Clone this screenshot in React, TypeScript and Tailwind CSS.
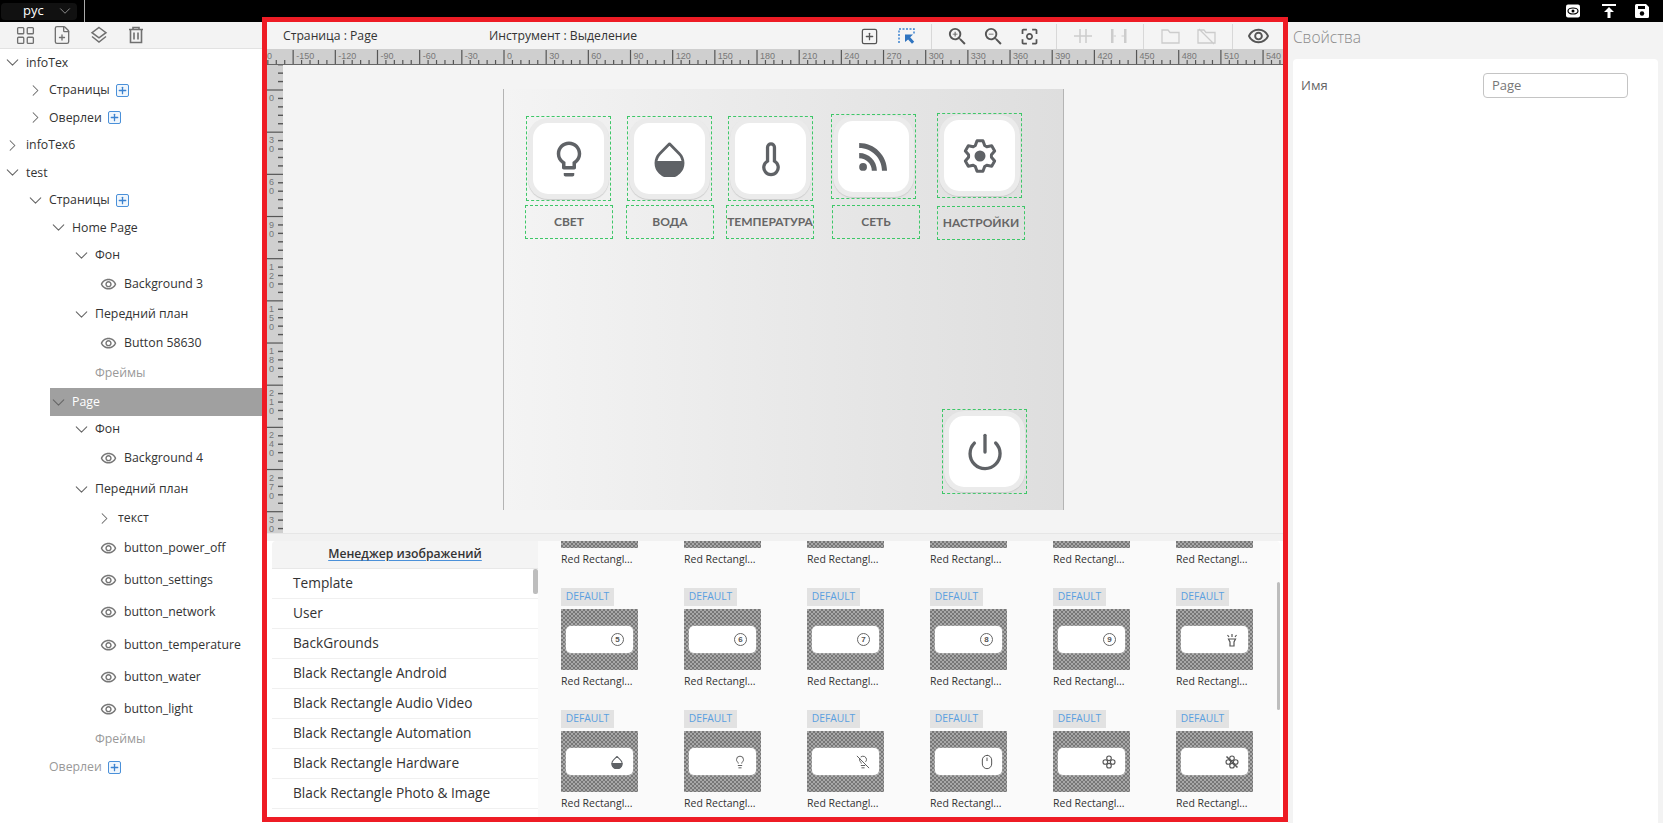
import { ChevronDown, ChevronRight, FilePlus, LayoutGrid, Lightbulb, LightbulbOff, Mouse, Plus, Power, SquarePlus } from "lucide-react"
import { MdCenterFocusWeak, MdLightbulbOutline, MdOutlineVisibility, MdRssFeed, MdZoomIn, MdZoomOut } from "react-icons/md"
import type { ReactNode } from "react"

type Row = { text: string; cls: string; icon?: "down" | "right" | "eye"; plus?: boolean }

const rows: Row[] = [
  { text: "infoTex", cls: "h-[27.5px] pl-[6px]", icon: "down" },
  { text: "Страницы", cls: "h-[27.5px] pl-[29px]", icon: "right", plus: true },
  { text: "Оверлеи", cls: "h-[27.5px] pl-[29px]", icon: "right", plus: true },
  { text: "infoTex6", cls: "h-[27.5px] pl-[6px]", icon: "right" },
  { text: "test", cls: "h-[27.5px] pl-[6px]", icon: "down" },
  { text: "Страницы", cls: "h-[27.5px] pl-[29px]", icon: "down", plus: true },
  { text: "Home Page", cls: "h-[27.5px] pl-[52px]", icon: "down" },
  { text: "Фон", cls: "h-[27.5px] pl-[75px]", icon: "down" },
  { text: "Background 3", cls: "h-[31px] pl-[100px]", icon: "eye" },
  { text: "Передний план", cls: "h-[28px] pl-[75px]", icon: "down" },
  { text: "Button 58630", cls: "h-[30px] pl-[100px]", icon: "eye" },
  { text: "Фреймы", cls: "h-[30px] pl-[95px] text-[#999]" },
  { text: "Page", cls: "h-[28px] ml-[50px] pl-[2px] bg-[#a0a0a0] text-white", icon: "down" },
  { text: "Фон", cls: "h-[27px] pl-[75px]", icon: "down" },
  { text: "Background 4", cls: "h-[31px] pl-[100px]", icon: "eye" },
  { text: "Передний план", cls: "h-[31px] pl-[75px]", icon: "down" },
  { text: "текст", cls: "h-[27px] pl-[98px]", icon: "right" },
  { text: "button_power_off", cls: "h-[32px] pl-[100px]", icon: "eye" },
  { text: "button_settings", cls: "h-[32px] pl-[100px]", icon: "eye" },
  { text: "button_network", cls: "h-[33px] pl-[100px]", icon: "eye" },
  { text: "button_temperature", cls: "h-[32px] pl-[100px]", icon: "eye" },
  { text: "button_water", cls: "h-[32px] pl-[100px]", icon: "eye" },
  { text: "button_light", cls: "h-[32px] pl-[100px]", icon: "eye" },
  { text: "Фреймы", cls: "h-[28px] pl-[95px] text-[#999]" },
  { text: "Оверлеи", cls: "h-[28px] pl-[49px] text-[#999]", plus: true },
]

const imageGroups = [
  "Template",
  "User",
  "BackGrounds",
  "Black Rectangle Android",
  "Black Rectangle Audio Video",
  "Black Rectangle Automation",
  "Black Rectangle Hardware",
  "Black Rectangle Photo & Image",
]

const PlusBox = () => (
  <span className="ml-[6px] flex h-[13px] w-[13px] items-center justify-center rounded-[2px] border-[1.5px] border-[#4a90d9] bg-[#f0f6fc]">
    <Plus size={11} strokeWidth={2.8} className="text-[#3b82d0]" />
  </span>
)

const TreeRow = ({ row }: { row: Row }) => (
  <div className={`flex items-center text-[12.3px] text-[#333] ${row.cls}`}>
    {row.icon == "down" && (
      <span className="flex w-[20px]">
        <ChevronDown size={21} strokeWidth={1.2} className="ml-[-4px] text-[#666]" />
      </span>
    )}
    {row.icon == "right" && (
      <span className="flex w-[20px]">
        <ChevronRight size={19} strokeWidth={1.3} className="ml-[-3px] text-[#666]" />
      </span>
    )}
    {row.icon == "eye" && <MdOutlineVisibility size={17} className="mr-[7px] text-[#777]" />}
    <span>{row.text}</span>
    {row.plus && <PlusBox />}
  </div>
)

const TopIcons = () => (
  <div className="ml-auto mr-[13px] flex items-center">
    <svg width="16" height="16" viewBox="0 0 16 16">
      <rect x="1" y="1.5" width="14" height="13" rx="2" fill="white" />
      <ellipse cx="8" cy="8" rx="5" ry="3" fill="none" stroke="black" strokeWidth="1.2" />
      <circle cx="8" cy="8" r="1.5" fill="black" />
    </svg>
    <svg width="16" height="16" viewBox="0 0 16 16" fill="white" className="ml-[20px]">
      <rect x="1" y="1" width="14" height="2" />
      <path d="M8 4l5 5H9.500v6h-3V9H3z" />
    </svg>
    <svg width="16" height="16" viewBox="0 0 16 16" className="ml-[17px]">
      <path d="M1 2.500A1.500 1.500 0 0 1 2.500 1H12l3 3v9.500a1.500 1.500 0 0 1-1.500 1.500h-11A1.500 1.500 0 0 1 1 13.500z" fill="white" />
      <rect x="4" y="3" width="7" height="3" fill="black" />
      <circle cx="8" cy="10.500" r="2.200" fill="black" />
    </svg>
  </div>
)

const LeftTools = () => (
  <div className="flex h-[27px] items-center border-b border-[#e2e2e2] bg-[#f3f3f3] pl-[15px] text-[#707070]">
    <LayoutGrid size={21} strokeWidth={1.5} />
    <FilePlus size={20} strokeWidth={1.6} className="ml-[16px]" />
    <svg width="18" height="18" viewBox="0 0 18 18" fill="none" stroke="currentColor" strokeWidth="1.500" className="ml-[18px]">
      <path d="M9 1.500l7 5.200-7 5.200-7-5.200z" />
      <path d="M2 10.500l7 5.500 7-5.500" />
    </svg>
    <svg width="16" height="18" viewBox="0 0 16 18" fill="none" stroke="currentColor" strokeWidth="1.600" className="ml-[20px]">
      <path d="M1 3.500h14M5 3V1.500h6V3M2.500 3.500V16.500h11V3.500M6 6.500v7M10 6.500v7" />
    </svg>
  </div>
)

const Sep = ({ cls }: { cls: string }) => <span className={`h-[25px] w-px bg-[#d8d8d8] ${cls}`} />

const CanvasTools = () => (
  <div className="flex h-[27px] items-center bg-[#f4f4f4] pl-[16px] pt-[1px] text-[12.2px] text-[#333]">
    <span className="w-[206px]">Страница : Page</span>
    <span className="w-[371px]">Инструмент : Выделение</span>
    <SquarePlus size={19} strokeWidth={1.6} className="text-[#555]" />
    <svg width="17" height="17" viewBox="0 0 17 17" fill="none" className="ml-[19px]">
      <path d="M1 15V1h15v6" stroke="#3b82d0" strokeWidth="1.500" strokeDasharray="2 1.500" />
      <path d="M7 6.500h8l-2.800 2.800 4 4.400-2.200 2-3.900-4.300L7 14z" fill="#2f74c0" />
    </svg>
    <Sep cls="ml-[16px]" />
    <MdZoomIn size={23} className="ml-[14px] text-[#555]" />
    <MdZoomOut size={23} className="ml-[13px] text-[#555]" />
    <MdCenterFocusWeak size={21} className="ml-[14px] text-[#555]" />
    <Sep cls="ml-[16px]" />
    <svg width="18" height="16" viewBox="0 0 18 16" fill="none" stroke="#ccc" strokeWidth="1.500" className="ml-[17px]">
      <path d="M0 8h18M6 1v14M12 1v14" />
    </svg>
    <svg width="18" height="18" viewBox="0 0 18 18" fill="#ccc" className="ml-[18px]">
      <rect x="1" y="2" width="2.500" height="14" />
      <rect x="14" y="2" width="2.500" height="14" />
      <path d="M3.500 9H6M11.500 9H14" stroke="#ccc" />
    </svg>
    <Sep cls="ml-[15px]" />
    <svg width="19" height="15" viewBox="0 0 19 15" fill="none" stroke="#ccc" strokeWidth="1.300" className="ml-[17px]">
      <path d="M1 14V1h6l2 2.500h9V14z" />
    </svg>
    <svg width="19" height="17" viewBox="0 0 19 17" fill="none" stroke="#ccc" strokeWidth="1.300" className="ml-[17px]">
      <path d="M1 15V2h6l2 2.500h9V15zM2 1l15 15" />
    </svg>
    <Sep cls="ml-[16px]" />
    <MdOutlineVisibility size={23} className="ml-[14px] text-[#555]" />
  </div>
)

const majors = Array.from({ length: 25 }, (_, i) => i - 6)
const minorSteps = [1, 2, 3, 4]
const pitch = 42.17

const TopRuler = () => (
  <svg width="1016" height="16" className="block shrink-0 bg-[#cfcfcf]">
    {majors.map((k) => {
      const x = 237 + k * pitch
      return (
        <g key={k}>
          <line x1={x} x2={x} y1="1" y2="16" stroke="#555" strokeWidth="1.200" />
          <text x={x + 3} y="10" fontSize="9" fill="#777" fontFamily="Liberation Sans">{k * 30}</text>
          {minorSteps.map((m) => (
            <line key={m} x1={x + (m * pitch) / 5} x2={x + (m * pitch) / 5} y1="11" y2="16" stroke="#555" strokeWidth="1.200" />
          ))}
        </g>
      )
    })}
    <line x1="0" x2="1016" y1="15.500" y2="15.500" stroke="#666" />
  </svg>
)

const LeftRuler = () => (
  <svg width="16" height="468" className="block shrink-0 bg-[#cfcfcf]">
    {Array.from({ length: 12 }, (_, i) => i - 1).map((k) => {
      const y = 25 + k * pitch
      return (
        <g key={k}>
          <line x1="0" x2="16" y1={y} y2={y} stroke="#555" strokeWidth="1.200" />
          {k >= 0 && String(k * 30).split("").map((ch, i) => (
            <text key={i} x="2" y={y + 11 + i * 9} fontSize="9" fill="#777" fontFamily="Liberation Sans">{ch}</text>
          ))}
          {minorSteps.map((m) => (
            <line key={m} x1="11" x2="16" y1={y + (m * pitch) / 5} y2={y + (m * pitch) / 5} stroke="#555" strokeWidth="1.400" />
          ))}
        </g>
      )
    })}
  </svg>
)

const Drop = ({ size }: { size: number }) => (
  <svg width={size} height={size} viewBox="0 0 24 24" fill="none" stroke="#5f6266" strokeWidth="1.800">
    <path d="M12 2.500L5.800 8.700a8.800 8.800 0 1 0 12.400 0z" strokeLinejoin="round" />
    <path d="M3.500 14.500a8.500 8.500 0 0 0 17 0z" fill="#5f6266" />
  </svg>
)

const Thermo = () => (
  <svg width="36" height="36" viewBox="0 0 24 24" fill="none" stroke="#5f6266" strokeWidth="2.200">
    <path d="M9.700 4.200a2.300 2.300 0 0 1 4.600 0v9.200a4.800 4.800 0 1 1-4.600 0z" />
  </svg>
)

// six flat teeth, worked out around the centre of a 36 box
const gearPoints = [0, 1, 2, 3, 4, 5]
  .flatMap((i) => {
    const a = (i * 60 - 90) * (Math.PI / 180)
    const at = (r: number, d: number) => {
      const t = a + (d * Math.PI) / 180
      return `${18 + r * Math.cos(t)},${18 + r * Math.sin(t)}`
    }
    return [at(11.5, -24), at(15.5, -11), at(15.5, 11), at(11.5, 24)]
  })
  .join(" ")

const Gear = () => (
  <svg width="36" height="36" viewBox="0 0 36 36" fill="none" stroke="#5f6266" strokeWidth="3" strokeLinejoin="round">
    <polygon points={gearPoints} />
    <circle cx="18" cy="18" r="5.500" fill="#5f6266" stroke="none" />
  </svg>
)

const AppButton = ({ cls, children }: { cls: string; children: ReactNode }) => (
  <div className={`absolute flex h-[85px] w-[85px] items-center justify-center border border-dashed border-[#3ec768] ${cls}`}>
    <div className="flex h-[81px] w-[81px] items-center justify-center rounded-[20px] bg-[#ebebeb] shadow-[0_1px_1px_#ccc]">
      <div className="flex h-[71px] w-[71px] items-center justify-center rounded-[15px] bg-white">
        {children}
      </div>
    </div>
  </div>
)

const Caption = ({ cls, text }: { cls: string; text: string }) => (
  <div className={`absolute flex h-[34px] items-center justify-center whitespace-nowrap border border-dashed border-[#3ec768] font-['Lato',sans-serif] text-[12px] font-bold text-[#666] ${cls}`}>
    {text}
  </div>
)

const PageCanvas = () => (
  <div className="flex h-[468px] flex-1 bg-[#f4f4f4] pl-[220px] pt-[24px]">
    <div className="relative h-[421px] w-[561px] border-x border-x-[#b4b4b4] bg-gradient-to-r from-[#f4f4f4] to-[#dedede]">
      <AppButton cls="left-[22px] top-[27px]"><MdLightbulbOutline size={42} className="text-[#5f6266]" /></AppButton>
      <AppButton cls="left-[123px] top-[27px]"><Drop size={37} /></AppButton>
      <AppButton cls="left-[224px] top-[27px]"><Thermo /></AppButton>
      <AppButton cls="left-[327px] top-[25px]"><MdRssFeed size={43} className="text-[#5f6266]" /></AppButton>
      <AppButton cls="left-[433px] top-[24px]"><Gear /></AppButton>
      <AppButton cls="left-[438px] top-[320px]"><Power size={40} strokeWidth={2} className="text-[#5f6266]" /></AppButton>
      <Caption cls="left-[21px] top-[116px] w-[88px]" text="СВЕТ" />
      <Caption cls="left-[122px] top-[116px] w-[88px]" text="ВОДА" />
      <Caption cls="left-[222px] top-[116px] w-[88px]" text="ТЕМПЕРАТУРА" />
      <Caption cls="left-[328px] top-[116px] w-[88px]" text="СЕТЬ" />
      <Caption cls="left-[433px] top-[117px] w-[88px]" text="НАСТРОЙКИ" />
    </div>
  </div>
)

const Digit = ({ n }: { n: number }) => (
  <span className="flex h-[13px] w-[13px] items-center justify-center rounded-full border border-[#666] font-['Liberation_Sans',sans-serif] text-[8px] font-bold leading-none text-[#555]">{n}</span>
)

const FanIcon = ({ off }: { off?: boolean }) => (
  <svg width="14" height="14" viewBox="0 0 14 14" fill="none" stroke="#555" strokeWidth="1.100">
    <circle cx="7" cy="3.300" r="2.300" />
    <circle cx="7" cy="10.700" r="2.300" />
    <circle cx="3.300" cy="7" r="2.300" />
    <circle cx="10.700" cy="7" r="2.300" />
    {off && <path d="M1.500 1.500l11 11" strokeWidth="1.500" />}
  </svg>
)

const Torch = () => (
  <svg width="14" height="14" viewBox="0 0 14 14" fill="none" stroke="#555" strokeWidth="1.200">
    <path d="M3.500 6h7L9 9v4H5V9zM7 1v3M2.500 2l1.500 2M11.500 2L10 4" />
  </svg>
)

const thumbRows: ReactNode[][] = [
  [null, null, null, null, null, null],
  [<Digit n={5} />, <Digit n={6} />, <Digit n={7} />, <Digit n={8} />, <Digit n={9} />, <Torch />],
  [
    <Drop size={14} />,
    <Lightbulb size={14} strokeWidth={1.6} className="text-[#555]" />,
    <LightbulbOff size={14} strokeWidth={1.6} className="text-[#555]" />,
    <Mouse size={16} strokeWidth={1.5} className="mr-[-2px] text-[#555]" />,
    <FanIcon />,
    <FanIcon off />,
  ],
]

const Tile = ({ icon }: { icon: ReactNode }) => (
  <div className="h-[122px] w-[123px] shrink-0">
    <span className="flex h-[18px] w-[53px] items-center justify-center bg-[#e2e2e2] text-[10.3px] text-[#5aa0e0]">DEFAULT</span>
    <div className="mt-[3px] flex h-[61px] w-[77px] items-center bg-[repeating-conic-gradient(#777777_0_25%,#a8a8a8_0_50%)] bg-[length:4px_4px] pl-[5px]">
      <div className="flex h-[27px] w-[67px] items-center justify-end rounded-[5px] bg-white pr-[9px] shadow-[0_0_2px_#ddd]">
        {icon}
      </div>
    </div>
    <p className="mt-[4px] text-[10.5px] leading-[15px] text-[#333]">Red Rectangl...</p>
  </div>
)

const ImageManager = () => (
  <div className="ml-[5px] mr-[3px] flex h-[276px] overflow-hidden rounded-t-[4px]">
    <div className="relative w-[266px] shrink-0 bg-white">
      <div className="flex h-[28px] items-center justify-center border-b border-[#e8e8e8] bg-[#f4f4f4]">
        <span className="text-[12.2px] font-semibold text-[#333] underline decoration-[#4a90d9] underline-offset-2">Менеджер изображений</span>
      </div>
      {imageGroups.map((name) => (
        <div className="flex h-[30px] items-center border-b border-[#f0f0f0] pl-[21px] text-[13.7px] text-[#333]" key={name}>
          {name}
        </div>
      ))}
      <span className="absolute right-0 top-[28px] h-[25px] w-[5px] rounded-[2px] bg-[#bdbdbd]" />
    </div>
    <div className="relative flex-1 overflow-hidden bg-[#fafafa] pl-[23px]">
      <div className="mt-[-75px]">
        {thumbRows.map((row, r) => (
          <div className="flex" key={r}>
            {row.map((icon, i) => <Tile icon={icon} key={i} />)}
          </div>
        ))}
      </div>
      <span className="absolute right-0 top-[41px] h-[128px] w-[3px] rounded-[2px] bg-[#bdbdbd]" />
    </div>
  </div>
)

const App = () => {
  return (
    <div className="flex h-[823px] w-[1663px] flex-col overflow-hidden bg-white font-['Open_Sans',sans-serif]">
      <div className="flex h-[22px] shrink-0 items-center bg-black">
        <div className="flex h-full w-[85px] items-center border-r border-[#aaa] pl-[1px]">
          <div className="flex h-[17px] w-[76px] items-center rounded-[4px] bg-[#111] pl-[22px] text-[13px] text-white">
            рус
            <ChevronDown size={18} strokeWidth={1.2} className="ml-[12px] text-[#999]" />
          </div>
        </div>
        <TopIcons />
      </div>
      <div className="flex flex-1">
        <div className="w-[262px] shrink-0">
          <LeftTools />
          {rows.map((row, i) => <TreeRow row={row} key={i} />)}
        </div>
        <div className="relative z-10 mt-[-5px] h-[805px] w-[1026px] shrink-0 border-[5px] border-[#ee1c25] bg-white">
          <CanvasTools />
          <TopRuler />
          <div className="flex">
            <LeftRuler />
            <PageCanvas />
          </div>
          <div className="h-[8px] border-t border-[#e6e6e6] bg-[#f1f1f1]" />
          <ImageManager />
        </div>
        <div className="flex-1 bg-[#f3f3f3] px-[5px]">
          <h2 className="mb-[6px] flex h-[31px] items-center text-[15.5px] font-light text-[#8a8a8a]">Свойства</h2>
          <div className="h-[780px] rounded-[4px] bg-white pl-[8px] pt-[14px]">
            <div className="flex items-center text-[13px] text-[#666]">
              <span className="mt-[1px] w-[182px]">Имя</span>
              <div className="flex h-[25px] w-[145px] items-center rounded-[4px] border border-[#c4c4c4] pl-[8px] text-[#777]">Page</div>
            </div>
          </div>
        </div>
      </div>
    </div>
  )
}

export default App
